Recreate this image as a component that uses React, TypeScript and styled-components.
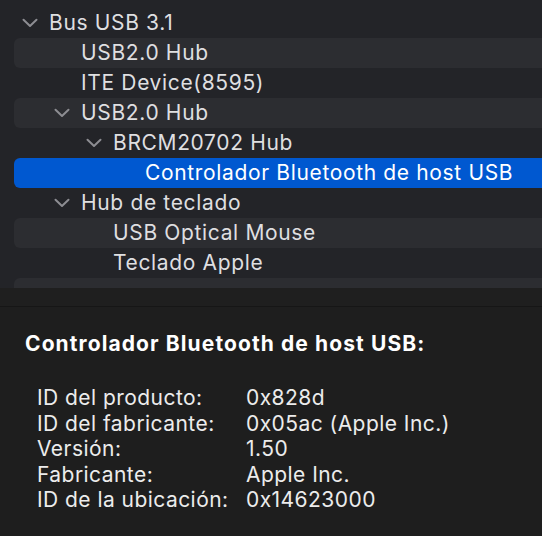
import React from "react";
import styled, { createGlobalStyle } from "styled-components";

const GlobalStyle = createGlobalStyle`
  html, body {
    margin: 0;
    padding: 0;
    background: #1e1e1e;
  }
  body {
    font-family: Inter, "Noto Sans", "Liberation Sans", sans-serif;
    -webkit-font-smoothing: antialiased;
  }
`;

const Window = styled.div`
  width: 542px;
  height: 536px;
  overflow: hidden;
  display: flex;
  flex-direction: column;
  background: #1e1e1e;
`;

const TreePanel = styled.div`
  height: 288px;
  flex: none;
  overflow: hidden;
  background: #232428;
  padding-top: 8px;
  box-sizing: border-box;
  display: flex;
  flex-direction: column;
`;

const Row = styled.div<{ $striped?: boolean; $selected?: boolean; $level: number }>`
  height: 30px;
  flex: none;
  margin-left: 14px;
  border-radius: 6px 0 0 6px;
  display: flex;
  align-items: center;
  padding-left: ${(p) => 8 + p.$level * 32}px;
  background: ${(p) => (p.$selected ? "#0058d0" : p.$striped ? "#2c2d31" : "transparent")};
  color: ${(p) => (p.$selected ? "#ffffff" : "#dfdfe0")};
  font-size: 21px;
  letter-spacing: 0.65px;
  white-space: nowrap;
`;

const ChevronSlot = styled.span`
  width: 16px;
  height: 30px;
  margin-right: 11px;
  display: flex;
  align-items: center;
  justify-content: center;
  flex: none;
`;

const Label = styled.span`
  line-height: 30px;
`;

const Splitter = styled.div`
  height: 18px;
  flex: none;
  background: #1f1f1f;
  border-bottom: 1px solid #161616;
`;

const Details = styled.div`
  flex: 1;
  background: #1e1e1e;
  padding: 24px 0 0 25px;
  color: #ececec;
`;

const Title = styled.h2`
  margin: 0;
  font-size: 21px;
  font-weight: 700;
  letter-spacing: 1.1px;
  line-height: 25px;
  color: #ffffff;
`;

const PropList = styled.dl`
  margin: 29px 0 0 12px;
  display: grid;
  grid-template-columns: 209px 1fr;
  font-size: 21px;
  letter-spacing: 0.45px;
  line-height: 25.5px;
`;

const Key = styled.dt`
  margin: 0;
`;

const Value = styled.dd`
  margin: 0;
`;

const Chevron = () => (
  <svg width="16" height="10" viewBox="0 0 16 10" aria-hidden="true">
    <path
      d="M1.5 1.8 L8 8 L14.5 1.8"
      fill="none"
      stroke="#8d8d92"
      strokeWidth="2"
      strokeLinecap="round"
      strokeLinejoin="round"
    />
  </svg>
);

type Node = { label: string; level: number; expanded?: boolean; selected?: boolean };

const nodes: Node[] = [
  { label: "Bus USB 3.1", level: 0, expanded: true },
  { label: "USB2.0 Hub", level: 1 },
  { label: "ITE Device(8595)", level: 1 },
  { label: "USB2.0 Hub", level: 1, expanded: true },
  { label: "BRCM20702 Hub", level: 2, expanded: true },
  { label: "Controlador Bluetooth de host USB", level: 3, selected: true },
  { label: "Hub de teclado", level: 1, expanded: true },
  { label: "USB Optical Mouse", level: 2 },
  { label: "Teclado Apple", level: 2 },
  { label: "", level: 0 },
];

const props: [string, string][] = [
  ["ID del producto:", "0x828d"],
  ["ID del fabricante:", "0x05ac (Apple Inc.)"],
  ["Versión:", "1.50"],
  ["Fabricante:", "Apple Inc."],
  ["ID de la ubicación:", "0x14623000"],
];

export default function App() {
  return (
    <Window>
      <GlobalStyle />
      <TreePanel>
        {nodes.map((n, i) => (
          <Row key={i} $level={n.level} $striped={i % 2 === 1} $selected={n.selected}>
            <ChevronSlot>{n.expanded ? <Chevron /> : null}</ChevronSlot>
            <Label>{n.label}</Label>
          </Row>
        ))}
      </TreePanel>
      <Splitter />
      <Details>
        <Title>Controlador Bluetooth de host USB:</Title>
        <PropList>
          {props.map(([k, v]) => (
            <React.Fragment key={k}>
              <Key>{k}</Key>
              <Value>{v}</Value>
            </React.Fragment>
          ))}
        </PropList>
      </Details>
    </Window>
  );
}
